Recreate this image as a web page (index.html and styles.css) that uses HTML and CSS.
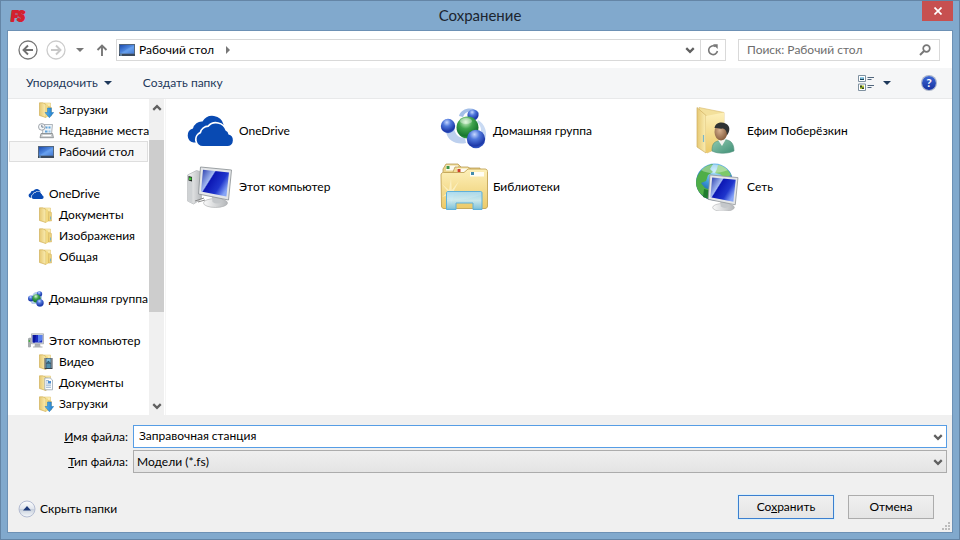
FILE: index.html
```html
<!DOCTYPE html>
<html lang="ru">
<head>
<meta charset="utf-8">
<meta name="viewport" content="width=device-width, initial-scale=1">
<title>Сохранение</title>
<link rel="stylesheet" href="styles.css">
</head>
<body>
<svg class="defs" width="0" height="0" aria-hidden="true">
  <defs>
    <linearGradient id="gFolder" x1="0" x2="0" y1="0" y2="1"><stop offset="0" stop-color="#fdf0ba"/><stop offset="1" stop-color="#ecca69"/></linearGradient>
    <linearGradient id="gFlap" x1="0" x2="1"><stop offset="0" stop-color="#e6c873"/><stop offset="1" stop-color="#fbeeb4"/></linearGradient>
    <linearGradient id="gScreen" x1="0" y1="0" x2="1" y2=".6"><stop offset="0" stop-color="#2336a8"/><stop offset=".38" stop-color="#a3b9f2"/><stop offset=".42" stop-color="#0c17b4"/><stop offset=".75" stop-color="#1f35cc"/><stop offset="1" stop-color="#86a4f6"/></linearGradient>
    <linearGradient id="gDesk" x1="0" y1="0" x2="1" y2="1"><stop offset="0" stop-color="#1c4cb0"/><stop offset=".6" stop-color="#5b96ea"/><stop offset="1" stop-color="#2a5fc4"/></linearGradient>
    <linearGradient id="gMetal" x1="0" x2="1"><stop offset="0" stop-color="#fafafa"/><stop offset="1" stop-color="#b4b7ba"/></linearGradient>
    <linearGradient id="gStand" x1="0" y1="0" x2="0" y2="1"><stop offset="0" stop-color="#8fd0f2"/><stop offset=".5" stop-color="#c4eafa"/><stop offset="1" stop-color="#6dbfe9"/></linearGradient>
    <linearGradient id="gArrow" x1="0" x2="1"><stop offset="0" stop-color="#57b4f2"/><stop offset="1" stop-color="#1d79c8"/></linearGradient>
    <radialGradient id="gBlue" cx=".42" cy=".25" r=".78"><stop offset="0" stop-color="#c6d8ff"/><stop offset=".35" stop-color="#5078dc"/><stop offset=".8" stop-color="#1c38a8"/><stop offset="1" stop-color="#3c62cc"/></radialGradient>
    <radialGradient id="gGreen" cx=".42" cy=".25" r=".78"><stop offset="0" stop-color="#d2f5cd"/><stop offset=".4" stop-color="#3fa34c"/><stop offset=".8" stop-color="#17772e"/><stop offset="1" stop-color="#3aa54a"/></radialGradient>
    <radialGradient id="gOcean" cx=".5" cy=".2" r=".85"><stop offset="0" stop-color="#b4e8fc"/><stop offset=".45" stop-color="#3a96d8"/><stop offset="1" stop-color="#0a3270"/></radialGradient>
    <radialGradient id="gSkin" cx=".4" cy=".4" r=".7"><stop offset="0" stop-color="#d8b290"/><stop offset="1" stop-color="#7b5233"/></radialGradient>
    <linearGradient id="gShirt" x1="0" x2="1" y1="0" y2="1"><stop offset="0" stop-color="#93ccb2"/><stop offset="1" stop-color="#3f8f76"/></linearGradient>
    <linearGradient id="gRound" x1="0" y1="0" x2="0" y2="1"><stop offset="0" stop-color="#ffffff"/><stop offset=".5" stop-color="#dfe4ec"/><stop offset=".52" stop-color="#c8d0dc"/><stop offset="1" stop-color="#f6f9fc"/></linearGradient>
  </defs>

  <symbol id="folder" viewBox="0 0 16 16">
    <path d="M6 1h6.500v12.500L6 15z" fill="url(#gFolder)" stroke="#dcbc62" stroke-width=".5"/>
    <path d="M1.500 .8H5l3 1.700v13L1.500 13.500z" fill="url(#gFlap)" stroke="#cba748" stroke-width=".6"/>
    <path d="M8 2.500h2v12L8 15.500z" fill="#f2d981"/>
    <path d="M10.500 4.500l3 1v8.500h-3z" fill="#ecd07a" stroke="#cba748" stroke-width=".4"/>
    <path d="M12.500 9.500v3" stroke="#6fb0cc" stroke-width=".9"/>
  </symbol>
  <symbol id="downloads" viewBox="0 0 16 16">
    <use href="#folder"/>
    <path d="M9.500 6h3.800v4.500h2.400L11.400 15.700 7 10.500h2.500z" fill="url(#gArrow)" stroke="#1e76bd" stroke-width=".5"/>
  </symbol>
  <symbol id="video" viewBox="0 0 16 16">
    <use href="#folder"/>
    <path d="M6.500 4h8v11h-8z" fill="#39434d"/>
    <path d="M8.300 4.500h4.400v4.300H8.300z" fill="#78b7d9"/><path d="M8.300 9.500h4.400V14H8.300z" fill="#4f8fae"/>
    <path d="M8.300 8.800l2-2 2.400 2z" fill="#27566d"/>
    <path d="M7.400 4.500v10M13.600 4.500v10" stroke="#e8ecef" stroke-dasharray="1 1" stroke-width=".8"/>
  </symbol>
  <symbol id="documents" viewBox="0 0 16 16">
    <use href="#folder"/>
    <path d="M6.800 3h5.400L14.500 5v9.800H6.800z" fill="#fcfdfe" stroke="#8b9aa8" stroke-width=".7"/>
    <path d="M8 5.500h3M8 7h1.500M8 9h5M8 10.700h5M8 12.400h5" stroke="#7c9fc4" stroke-width=".7"/>
    <path d="M10 6h3v2.400h-3z" fill="#4b8cd0"/>
  </symbol>
  <symbol id="recent" viewBox="0 0 16 16">
    <path d="M5 1.500h9.500l-1 9.500H4.500z" fill="#eef3f7" stroke="#90989f" stroke-width=".7"/>
    <path d="M7.500 3.500h2v2h-2zM10.500 3.500h2v2h-2zM7 7.500h2.500v2H7z" fill="#5fa3da"/>
    <path d="M10.500 7.500h2v2h-2z" fill="#9dc7e8"/>
    <path d="M3 10.500h11.500l1 4.200H2z" fill="#c9ccce" stroke="#777c80" stroke-width=".7"/>
    <path d="M4.500 12h8.500v1.200H4.500z" fill="#fff"/>
    <circle cx="3.800" cy="3.900" r="3.300" fill="#f6f8fa" stroke="#8b9299" stroke-width=".8"/>
    <path d="M3.800 1.800v2.300h1.800" fill="none" stroke="#4b6074" stroke-width=".8"/>
  </symbol>
  <symbol id="desktop" viewBox="0 0 16 16">
    <path d="M0 2h16v12H0z" fill="#54667c"/>
    <path d="M1 3h14v8.500H1z" fill="url(#gDesk)"/>
    <path d="M1 11.500C5 10 9 5 15 4v7.500z" fill="#7cb2f3" opacity=".35"/>
    <path d="M0 12h16v2H0z" fill="#3c4a5c"/><path d="M1 12.500h2v1H1z" fill="#83b4dc"/>
  </symbol>
  <symbol id="cloud" viewBox="0 0 48 30">
    <path d="M12 26.500H7.500A7.200 7.200 0 0 1 7 12.500 9 9 0 0 1 16.500 5.500 11.500 11.500 0 0 1 37.500 8.500L36 20H14z" fill="#094ab2"/>
    <path d="M17 30A6.600 6.600 0 0 1 15 17.200 8 8 0 0 1 22.500 11 10 10 0 0 1 39.500 14.500 5 5 0 0 1 42.500 18.500 5.900 5.900 0 0 1 42 30z" fill="#094ab2" stroke="#fff" stroke-width="3.400" paint-order="stroke"/>
  </symbol>
  <symbol id="homegroup" viewBox="0 0 48 48">
    <path d="M19 9C21 0 35 -1 39 6L37 9C32 2 25 4 23 10z" fill="#a4bfe8"/>
    <path d="M38 13c7 4 10 13 7 20l-5-4c2-6 1-10-3-14z" fill="#c9daf3"/>
    <path d="M6 25c2 9 10 13 20 11l-1-5c-7 0-10-4-11-10z" fill="#bdd0ee"/>
    <circle cx="8" cy="19" r="7.200" fill="url(#gBlue)"/>
    <circle cx="33" cy="8" r="5.600" fill="url(#gBlue)"/>
    <circle cx="27.500" cy="20.500" r="11" fill="url(#gGreen)"/>
    <circle cx="36" cy="32" r="9.200" fill="url(#gBlue)"/>
    <ellipse cx="26" cy="14" rx="6" ry="3" fill="#fff" opacity=".35"/>
  </symbol>
  <symbol id="homegroup-small" viewBox="0 0 16 16">
    <path d="M5 3C7 0 12 0 14 3v7L10 13H4L2 10z" fill="#b5cbeb"/>
    <circle cx="3" cy="7.500" r="3" fill="url(#gBlue)"/>
    <circle cx="11.500" cy="3" r="2.700" fill="url(#gBlue)"/>
    <circle cx="8.500" cy="7.500" r="4.200" fill="url(#gGreen)"/>
    <circle cx="12" cy="12" r="3.700" fill="url(#gBlue)"/>
  </symbol>
  <symbol id="monitor" viewBox="0 0 36 42">
    <ellipse cx="18" cy="37" rx="12" ry="4.500" fill="url(#gMetal)" stroke="#a7a9ab" stroke-width=".6"/>
    <path d="M14 28l11 1-1 7c-3 2-6 2-9 0z" fill="#c4c7ca"/>
    <path d="M3 1l31 3-3 30L1 28z" fill="#e4e6e8" stroke="#92979b" stroke-width=".9"/>
    <path d="M5.500 3.800l26 2.600-2.600 24.200L3.500 25.600z" fill="url(#gScreen)"/>
  </symbol>
  <symbol id="computer" viewBox="0 0 48 48">
    <path d="M1.500 12l9-4.500 5 1.500v27l-8 5-6-3z" fill="url(#gMetal)" stroke="#b0b3b6" stroke-width=".7"/>
    <path d="M1.500 12l5 1.500v27l-5-2.500z" fill="#cfd2d4"/><path d="M2.500 13l3.500 1v4.500l-3.500-1z" fill="#222b25"/>
    <path d="M3 14.500h2.500v2.500H3z" fill="#42c53b"/>
    <path d="M9 38l9-3M12 39l7-2" stroke="#888" stroke-width="1"/>
    <use href="#monitor" x="11" y="3" width="37" height="42"/>
  </symbol>
  <symbol id="computer-small" viewBox="0 0 16 16">
    <path d="M0 5.500l2-1 1 .5V14l-2 .5L0 14z" fill="#a5abad"/><path d="M.7 7h1.200v2H.7z" fill="#42b33b"/>
    <path d="M7 10.500h5l.5 3h2v1H5v-1h1.500z" fill="#aeb1b4"/>
    <path d="M3.500 .8h12v10h-12z" fill="#dadddf" stroke="#8d9297" stroke-width=".6"/>
    <path d="M4.700 2h9.600v7.500H4.700z" fill="#1a2bc4"/><path d="M10 2h4.300v5L10 9.500z" fill="#5a82ee"/><path d="M4.700 2H8L7 9.500H4.700z" fill="#0c169b"/>
  </symbol>
  <symbol id="libraries" viewBox="0 0 48 48">
    <path d="M3 6l3-5h12l4 4h18v20H3z" fill="#ecd58c" stroke="#b99c58" stroke-width=".8"/>
    <path d="M6 2.500h12v5H6z" fill="#fdfaf0"/><path d="M6.500 3h3v3h-3z" fill="#3d9446"/>
    <path d="M13 9l2-5h13l4 3h12v20H13z" fill="#f3df98" stroke="#b99c58" stroke-width=".8"/>
    <path d="M17 5.500h11v5H17z" fill="#fdfaf0"/><path d="M17.500 6h3v3h-3z" fill="#cf3d25"/>
    <path d="M1 12c0-1.500 1-2.500 2.500-2.500H24l4-3.500h17c1.500 0 2.500 1 2.500 2.500V43c0 1.500-1 2.500-2.500 2.500H4C2.500 45.500 1.500 44.500 1.500 43z" fill="url(#gFolder)" stroke="#c2a355" stroke-width=".9"/>
    <path d="M30 9h14v4.500H30z" fill="#fffdf4"/><path d="M31 9h3v3h-3z" fill="#438cae"/>
    <path d="M11 15l.8 12L19 18l-5.500 10.500L24 31l-10 1-3 10-1.500-10L2 34l6-5-6-8 7 6z" fill="#fffbe0" opacity=".55"/>
    <path d="M6.500 30c0-1 .5-1.500 1.500-1.500h32.500c1 0 1.500.5 1.500 1.500v16.500H33V40H16v6.500H6.500z" fill="url(#gStand)" fill-opacity=".88" stroke="#5fb0da" stroke-width="1"/>
    <path d="M7 36c12 3 24-1 34-4v-3H7z" fill="#fff" opacity=".15"/>
  </symbol>
  <symbol id="user" viewBox="0 0 48 48">
    <path d="M5 .5l25 5v33L13 46z" fill="#f3e09b" stroke="#dcc077" stroke-width=".7"/>
    <path d="M3 .5l9 8V46L3 40z" fill="url(#gFlap)" stroke="#d0b062" stroke-width=".7"/>
    <path d="M12 9l18-3.500V39l-18 7z" fill="url(#gFolder)"/>
    <path d="M9.500 28v7" stroke="#7bb6c8" stroke-width="1.200"/>
    <path d="M18 44c0-7 2-9 6-10l5-2 4 1c5 1 7 5 7 11-7 3-16 3-22 0z" fill="url(#gShirt)" stroke="#4f8f7b" stroke-width=".6"/>
    <path d="M24 33l4 6 4-7z" fill="#f2f3ef"/>
    <ellipse cx="27" cy="25" rx="6.500" ry="8.500" fill="url(#gSkin)"/>
    <path d="M20.500 21c1-7 11-7 14-2 2 3 0 8-1.500 9-.5-4-1.500-6-4-6.500-3 .5-6-.5-8.500-.5z" fill="#303333"/>
  </symbol>
  <symbol id="network" viewBox="0 0 48 48">
    <circle cx="20.500" cy="19" r="18.500" fill="url(#gOcean)"/>
    <path d="M4 12C8 5 13 2 19 1l-3 5 3 3-5 3-2 6-5 2 4 5 6 2-2 9C4 32-1 22 4 12z" fill="#4fae48"/>
    <path d="M24 2c6 1 11 5 13 10l-6 3-5-4-5-1 2-4z" fill="#7cc96a"/>
    <path d="M10 26l7 2-2 8-6-2z" fill="#207c2f"/>
    <path d="M7 7c7-7 20-7 27 0-8 3-19 5-27 0z" fill="#fff" opacity=".35"/>
    <use href="#monitor" x="13" y="11" width="33" height="38"/>
  </symbol>
  <symbol id="chevron" viewBox="0 0 8 8">
    <path d="M1 2.500L4 5.500 7 2.500" fill="none" stroke="currentColor" stroke-width="1.800"/>
  </symbol>
</svg>

<div class="window">
  <header class="titlebar">
    <svg class="logo" viewBox="0 0 18 16" role="img" aria-label="FS"><text x="1" y="14" class="logo-text">FS</text></svg>
    <h1>Сохранение</h1>
    <button class="close" type="button" aria-label="Закрыть"><svg viewBox="0 0 8 8"><path d="M.5 .5l7 7M7.500 .5l-7 7" stroke="#fff" stroke-width="1.700"/></svg></button>
  </header>

  <main class="dialog">
    <nav class="navrow" aria-label="Навигация">
      <button class="icon-btn" type="button" aria-label="Назад"><svg class="round" viewBox="0 0 20 20"><circle cx="10" cy="10" r="9" fill="#fff" stroke="#777" stroke-width="1.300"/><path d="M15 10H6M10 5.500L5.500 10l4.500 4.500" fill="none" stroke="#707070" stroke-width="1.900"/></svg></button>
      <button class="icon-btn forward" type="button" aria-label="Вперёд"><svg class="round" viewBox="0 0 20 20"><circle cx="10" cy="10" r="9" fill="#fff" stroke="#ccc" stroke-width="1.300"/><path d="M5 10h9M10 5.500l4.500 4.500-4.500 4.500" fill="none" stroke="#c8c8c8" stroke-width="1.900"/></svg></button>
      <button class="icon-btn history" type="button" aria-label="Последние расположения"><svg class="tri" viewBox="0 0 8 4"><path d="M0 0h8L4 4z" fill="#777"/></svg></button>
      <button class="icon-btn up" type="button" aria-label="Вверх"><svg class="up-icon" viewBox="0 0 12 12"><path d="M6 12V1.500M1.500 6L6 1.500 10.500 6" fill="none" stroke="#777" stroke-width="1.900"/></svg></button>
      <div class="address">
        <svg class="i16"><use href="#desktop"/></svg>
        <a href="#desktop-folder">Рабочий стол</a>
        <svg class="crumb" viewBox="0 0 4 8"><path d="M0 0l4 4-4 4z" fill="#777"/></svg>
        <button class="icon-btn drop" type="button" aria-label="Показать список"><svg class="chev"><use href="#chevron"/></svg></button>
        <button class="icon-btn refresh" type="button" aria-label="Обновить"><svg viewBox="0 0 12 12"><path d="M8.500 2.500A4.400 4.400 0 1 0 10.400 7" fill="none" stroke="#777" stroke-width="1.600"/><path d="M6 .2h4.700v4.700z" fill="#777"/></svg></button>
      </div>
      <div class="search">
        <input type="search" aria-label="Поиск" placeholder="Поиск: Рабочий стол">
        <svg viewBox="0 0 12 12"><circle cx="7.500" cy="4.500" r="3.300" fill="none" stroke="#777" stroke-width="1.700"/><path d="M5 7L1 11" stroke="#777" stroke-width="2"/></svg>
      </div>
    </nav>

    <div class="toolbar">
      <button class="tool" type="button">Упорядочить<svg class="tri" viewBox="0 0 8 4"><path d="M0 0h8L4 4z" fill="#1e395b"/></svg></button>
      <button class="tool" type="button">Создать папку</button>
      <button class="tool view" type="button" aria-label="Изменить представление">
        <svg class="i16" viewBox="0 0 16 16"><path d="M.5 .5h7v6h-7zM.5 9h7v6.500h-7z" fill="#fff" stroke="#7f91a0"/><path d="M2 2h4v3H2z" fill="#91cbe7"/><path d="M2 3.500l2 .5 2-.5V5H2z" fill="#17485f"/><path d="M2 10.500h4V14H2z" fill="#b5c832"/><path d="M2 10.500h2v2H2zM4 12.500h2V14H4z" fill="#394829"/><path d="M9.500 2.500H16M9.500 4.500h4M9.500 10.500H16M9.500 12.500h4" stroke="#51667c"/></svg>
        <svg class="tri" viewBox="0 0 8 4"><path d="M0 0h8L4 4z" fill="#1e395b"/></svg>
      </button>
      <button class="tool help" type="button" aria-label="Справка"><span>?</span></button>
    </div>

    <div class="browser">
      <aside class="tree">
        <ul>
          <li><a class="child" href="#downloads"><svg class="i16"><use href="#downloads"/></svg>Загрузки</a></li>
          <li><a class="child" href="#recent"><svg class="i16"><use href="#recent"/></svg>Недавние места</a></li>
          <li><a class="child selected" href="#desktop-folder"><svg class="i16"><use href="#desktop"/></svg>Рабочий стол</a></li>
        </ul>
        <ul>
          <li><a href="#onedrive"><svg class="i16"><use href="#cloud"/></svg>OneDrive</a></li>
          <li><a class="child" href="#od-docs"><svg class="i16"><use href="#folder"/></svg>Документы</a></li>
          <li><a class="child" href="#od-images"><svg class="i16"><use href="#folder"/></svg>Изображения</a></li>
          <li><a class="child" href="#od-shared"><svg class="i16"><use href="#folder"/></svg>Общая</a></li>
        </ul>
        <ul>
          <li><a href="#homegroup"><svg class="i16"><use href="#homegroup-small"/></svg>Домашняя группа</a></li>
        </ul>
        <ul>
          <li><a href="#computer"><svg class="i16"><use href="#computer-small"/></svg>Этот компьютер</a></li>
          <li><a class="child" href="#pc-video"><svg class="i16"><use href="#video"/></svg>Видео</a></li>
          <li><a class="child" href="#pc-docs"><svg class="i16"><use href="#documents"/></svg>Документы</a></li>
          <li><a class="child" href="#pc-downloads"><svg class="i16"><use href="#downloads"/></svg>Загрузки</a></li>
        </ul>
      </aside>
      <div class="scrollbar" aria-hidden="true">
        <svg class="chev flip"><use href="#chevron"/></svg>
        <div class="track"><div class="thumb"></div></div>
        <svg class="chev"><use href="#chevron"/></svg>
      </div>
      <section class="files" aria-label="Рабочий стол">
        <a href="#onedrive"><svg class="i48"><use href="#cloud"/></svg>OneDrive</a>
        <a href="#homegroup"><svg class="i48"><use href="#homegroup"/></svg>Домашняя группа</a>
        <a href="#user"><svg class="i48"><use href="#user"/></svg>Ефим Поберёзкин</a>
        <a href="#computer"><svg class="i48"><use href="#computer"/></svg>Этот компьютер</a>
        <a href="#libraries"><svg class="i48"><use href="#libraries"/></svg>Библиотеки</a>
        <a href="#network"><svg class="i48"><use href="#network"/></svg>Сеть</a>
      </section>
    </div>

    <form class="footer">
      <div class="fields">
        <label for="filename"><u>И</u>мя файла:</label>
        <div class="combo"><input id="filename" type="text" value="Заправочная станция"><svg class="chev"><use href="#chevron"/></svg></div>
        <label for="filetype"><u>Т</u>ип файла:</label>
        <div class="combo"><select id="filetype"><option>Модели (*.fs)</option></select><svg class="chev"><use href="#chevron"/></svg></div>
      </div>
      <div class="actions">
        <button class="hide" type="button"><svg viewBox="0 0 18 18"><circle cx="9" cy="9" r="8" fill="url(#gRound)" stroke="#b4bcd2"/><path d="M9 6l4 4.500H5z" fill="#1f3b7a"/></svg>Скрыть папки</button>
        <button class="push primary" type="button"><span>Со<u>х</u>ранить</span></button>
        <button class="push" type="button">Отмена</button>
      </div>
      <svg class="grip" viewBox="0 0 8 8"><path d="M6 0h2v2H6zM3 3h2v2H3zM6 3h2v2H6zM0 6h2v2H0zM3 6h2v2H3zM6 6h2v2H6z" fill="#bcbcbc"/></svg>
    </form>
  </main>
</div>
</body>
</html>
```
FILE: styles.css
```css
* { box-sizing: border-box; }

body {
  margin: 0;
  font: 12px/16px Lato, "Segoe UI", sans-serif;
  color: #000;
}

button, input, select { font: inherit; color: inherit; }
button { border: 0; padding: 0; background: none; }
a { color: inherit; text-decoration: none; }
ul { list-style: none; margin: 0; padding: 0; }
svg { display: block; flex: none; }
.defs { position: absolute; }

.i16 { width: 16px; height: 16px; }
.i48 { width: 48px; height: 48px; }
.tri { width: 8px; height: 4px; }
.chev { width: 10px; height: 10px; color: #606060; }

.window {
  display: flex;
  flex-direction: column;
  min-height: 100vh;
  padding: 0 6px 6px;
  background: #81a9cd;
  border: 1px solid #6485a6;
}

.titlebar {
  display: grid;
  grid-template-columns: 1fr auto 1fr;
  align-items: start;
  height: 29px;
}
.logo { width: 18px; height: 16px; margin: 6px 0 0 3px; }
.logo-text { font: italic 900 13px Lato, sans-serif; fill: #d3202f; stroke: #d3202f; stroke-width: 2px; stroke-linejoin: round; }
h1 { margin: 4px 0 0; font-size: 15px; line-height: 20px; font-weight: 400; color: #1c2530; }
.close {
  justify-self: end;
  display: flex;
  align-items: center;
  justify-content: center;
  width: 31px;
  height: 20px;
  background: #c75050;
}
.close svg { width: 8px; height: 8px; }

.dialog {
  flex: 1;
  display: flex;
  flex-direction: column;
  background: #fff;
  border: 1px solid #6d91b5;
}

.navrow { display: flex; align-items: center; height: 37px; padding: 0 12px 0 10px; }
.icon-btn { display: flex; align-items: center; justify-content: center; flex: none; }
.round { width: 20px; height: 20px; }
.forward { margin-left: 8px; }
.history { margin-left: 10px; }
.up { margin-left: 12px; }
.up-icon { width: 12px; height: 12px; }
.address {
  flex: 1;
  display: flex;
  align-items: center;
  height: 22px;
  margin-left: 8px;
  padding-left: 2px;
  border: 1px solid #d9d9d9;
}
.address a { margin-left: 4px; }
.crumb { width: 4px; height: 8px; margin-left: 12px; }
.drop { margin-left: auto; width: 20px; height: 20px; }
.refresh { width: 25px; height: 20px; border-left: 1px solid #d9d9d9; }
.refresh svg { width: 12px; height: 12px; }
.search {
  display: flex;
  align-items: center;
  width: 202px;
  height: 22px;
  margin-left: 12px;
  padding: 0 8px;
  border: 1px solid #d9d9d9;
}
.search input { flex: 1; min-width: 0; padding: 0; border: 0; outline: 0; background: none; }
.search input::placeholder { color: #6d6d6d; opacity: 1; }
.search svg { width: 12px; height: 12px; }

.toolbar {
  display: flex;
  align-items: center;
  height: 31px;
  padding: 0 16px 0 18px;
  background: #f5f6f7;
  border-bottom: 1px solid #e8e9ea;
  color: #1e395b;
}
.tool { display: flex; align-items: center; gap: 6px; }
.tool + .tool { margin-left: 31px; }
.tool.view { margin-left: auto; gap: 9px; }
.help span {
  width: 14px;
  height: 14px;
  border-radius: 50%;
  background: linear-gradient(#3d68d4, #1732a0);
  box-shadow: 0 0 0 1px #a9b3c6;
  color: #fff;
  font-size: 12px;
  font-weight: 700;
  line-height: 14px;
}

.browser { flex: 1; display: flex; min-height: 0; }
.tree { width: 141px; overflow: hidden; }
.tree ul + ul { margin-top: 21px; }
.tree a {
  display: flex;
  align-items: center;
  gap: 5px;
  height: 21px;
  margin: 0 1px;
  padding-left: 18px;
  border: 1px solid transparent;
  white-space: nowrap;
}
.tree .child { padding-left: 28px; }
.tree .selected { background: #f7f7f7; border-color: #dedede; }

.scrollbar {
  display: flex;
  flex-direction: column;
  align-items: center;
  width: 15px;
  padding: 4px 0;
  background: #f0f0f0;
}
.flip { transform: rotate(180deg); }
.track { flex: 1; align-self: stretch; padding: 27px 0 4px; }
.thumb { height: 172px; background: #cdcdcd; }

.files {
  flex: 1;
  display: grid;
  grid-template-columns: repeat(auto-fill, 254px);
  grid-auto-rows: 48px;
  row-gap: 8px;
  align-content: start;
  margin-left: 1px;
  padding: 8px 0 8px 20px;
  border-left: 1px solid #f5f5f5;
}
.files a { display: flex; align-items: center; gap: 5px; }

.footer { position: relative; padding: 10px 5px 13px 10px; background: #f0f0f0; }
.fields { display: grid; grid-template-columns: 110px 1fr; column-gap: 5px; row-gap: 2px; align-items: center; }
.fields label { text-align: right; }
.combo { position: relative; display: flex; }
.combo input, .combo select { width: 100%; height: 23px; margin: 0; border-radius: 0; outline: 0; }
.combo input { padding: 0 20px 2px 5px; background: #fff; border: 1px solid #569de5; }
.combo select { padding: 0 20px 0 3px; appearance: none; background: linear-gradient(#efefef, #e4e4e4); border: 1px solid #acacac; }
.combo .chev { position: absolute; right: 4px; top: 7px; pointer-events: none; }

.actions { display: flex; align-items: center; gap: 14px; margin-top: 22px; padding-right: 13px; }
.hide { display: flex; align-items: center; gap: 4px; margin: 4px auto 0 0; }
.hide svg { width: 18px; height: 18px; }
.push { width: 86px; height: 24px; background: linear-gradient(#f0f0f0, #e5e5e5); border: 1px solid #acacac; }
.primary { width: 96px; border-color: #3c7fcf; box-shadow: 0 0 0 1px #dcf0fb; }
.grip { position: absolute; right: 2px; bottom: 2px; width: 8px; height: 8px; }
```
